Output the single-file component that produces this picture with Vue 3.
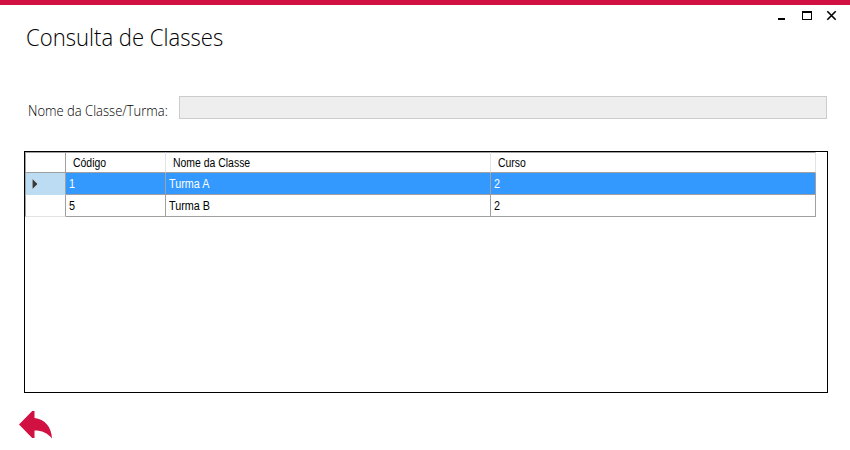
<script setup>
const columns = ['Código', 'Nome da Classe', 'Curso']
const rows = [
  { cells: ['1', 'Turma A', '2'], selected: true },
  { cells: ['5', 'Turma B', '2'], selected: false },
]
</script>

<template>
  <main class="window">
    <header class="titlebar">
      <h1>Consulta de Classes</h1>
      <div class="controls">
        <svg width="62" height="12" viewBox="0 0 62 12" shape-rendering="crispEdges">
          <path d="M1 8h7v2H1z" fill="#000" />
          <path d="M25 1h10v9H25zM26 3v6h8V3z" fill="#000" fill-rule="evenodd" />
          <path d="M50.3 1.3l8.4 8.4M58.7 1.3l-8.4 8.4" stroke="#000" stroke-width="1.6" shape-rendering="auto" />
        </svg>
      </div>
    </header>

    <div class="field">
      <label for="nome"><span>Nome da Classe/Turma:</span></label>
      <input id="nome" type="text" />
    </div>

    <section class="frame">
      <div class="row head">
        <div class="marker"></div>
        <div v-for="c in columns" :key="c" class="cell"><span>{{ c }}</span></div>
      </div>
      <div v-for="(r, i) in rows" :key="i" class="row" :class="{ selected: r.selected }">
        <div class="marker">
          <svg v-if="r.selected" width="8" height="12" viewBox="0 0 8 12">
            <path d="M1.5 1L6.5 6L1.5 11z" fill="#3a3a3a" stroke="#fff" stroke-opacity=".6" paint-order="stroke" />
          </svg>
        </div>
        <div v-for="(c, j) in r.cells" :key="j" class="cell"><span>{{ c }}</span></div>
      </div>
    </section>

    <button class="back" type="button" aria-label="Voltar">
      <svg width="35" height="30" viewBox="0 0 35 30">
        <path d="M1 14.5L14.2 1H16.5V8C26.5 9 33.5 16.5 34 28.5C29.5 23 24 20.5 16.5 20.5V28H14.2Z" fill="#d11141" />
      </svg>
    </button>
  </main>
</template>

<style>
body {
  background: #fff;
}
</style>

<style scoped>
.window {
  box-sizing: border-box;
  width: 850px;
  height: 450px;
  border-top: 5px solid #d11141;
  background: #fff;
  color: #000;
  overflow: hidden;
}
.titlebar {
  display: flex;
  justify-content: space-between;
  height: 91px;
  padding: 0 11px 0 26px;
}
h1 {
  margin: 15px 0 0;
  font: 300 24px/34px "Open Sans", "Noto Sans", sans-serif;
  white-space: nowrap;
  transform: scaleX(0.92);
  transform-origin: 0 0;
}
.controls {
  padding-top: 5px;
}
.controls svg {
  display: block;
}
.field {
  display: flex;
  height: 23px;
  padding-left: 28px;
}
label {
  width: 151px;
  padding-top: 5px;
  font: 300 14px/20px "Open Sans", "Noto Sans", sans-serif;
  white-space: nowrap;
}
label span {
  display: inline-block;
  transform: scaleX(0.93);
  transform-origin: 0 0;
}
input {
  box-sizing: border-box;
  width: 648px;
  height: 23px;
  padding: 0 4px;
  border: 1px solid #ccc;
  border-radius: 0;
  background: #eee;
}
.frame {
  box-sizing: border-box;
  width: 804px;
  height: 242px;
  margin: 32px 0 0 24px;
  border: 1px solid #000;
}
.row {
  display: grid;
  grid-template-columns: 41px 100px 325px 325px;
  width: 791px;
  height: 22px;
  font: 12px/22px "Liberation Sans", Arial, sans-serif;
}
.row > div {
  box-sizing: border-box;
  height: 22px;
  border-right: 1px solid #a0a0a0;
  border-bottom: 1px solid #a0a0a0;
}
.row .marker {
  display: flex;
  align-items: center;
  padding-left: 5px;
  border-left: 1px solid #a0a0a0;
  border-bottom-color: #e3e3e3;
}
.cell {
  padding-left: 3px;
  white-space: nowrap;
}
.cell span {
  display: inline-block;
  transform: scaleX(0.9);
  transform-origin: 0 0;
}
.head {
  height: 21px;
}
.head > div {
  height: 21px;
  border-top: 1px solid #a0a0a0;
}
.head .marker {
  border-bottom-color: #a0a0a0;
}
.head .cell {
  padding-left: 6.5px;
  border-right-color: #e3e3e3;
  line-height: 20px;
}
.head .cell span {
  transform: scaleX(0.87);
}
.selected .cell {
  background: #39f;
  color: #fff;
}
.selected .marker {
  background: #bcdcf4;
  border-bottom-color: #bcdcf4;
}
.back {
  display: block;
  margin: 17px 0 0 18px;
  padding: 0;
  border: 0;
  background: none;
}
.back svg {
  display: block;
}
</style>
